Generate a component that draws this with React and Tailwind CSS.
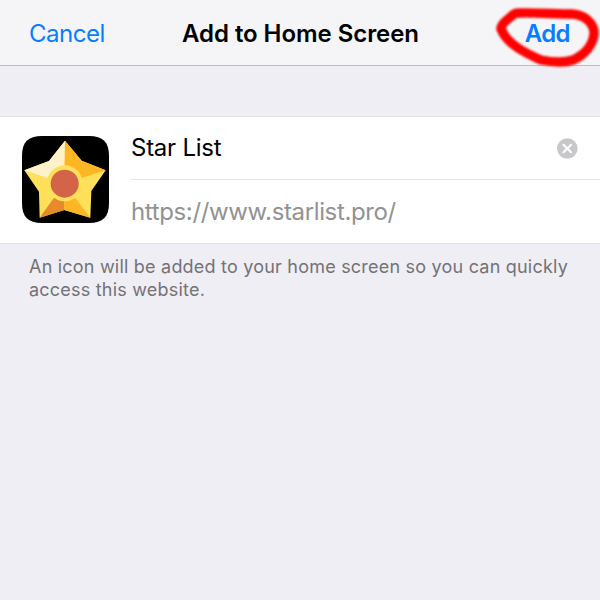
function StarIcon() {
  return (
    <svg viewBox="66 78 261 261" className="mb-[2px] size-[87px] shrink-0" aria-hidden="true">
      <path d="M126 78H267C309 78 327 96 327 138V279C327 321 309 339 267 339H126C84 339 66 321 66 279V138C66 96 84 78 126 78Z" fill="#000" />
      <path d="M195 92 245 152 317 181 274 243 271 323 193 300 119 323 117 245 73 181 147 153Z" fill="#ffe05a" />
      <path d="M195 92 147 153 73 181 144 204 193 220Z" fill="#fff2cb" />
      <path d="M195 92 245 152 317 181 244 204 193 220Z" fill="#ffb625" />
      <path d="M193 220 119 323 193 300Z" fill="#e68a2c" />
      <path d="M193 220 271 323 193 300Z" fill="#ffb625" />
      <circle cx="194" cy="220" r="54" fill="#ffe05a" />
      <circle cx="194" cy="221" r="42" fill="#d46447" />
    </svg>
  );
}

function ClearIcon() {
  return (
    <svg viewBox="0 0 21 21" className="size-[21px]" aria-hidden="true">
      <circle cx="10.3" cy="10.5" r="10.3" fill="#c8c8ca" />
      <path d="M6.5 6.7l7.6 7.6M14.1 6.7l-7.6 7.6" stroke="#fff" strokeWidth="2" strokeLinecap="round" />
    </svg>
  );
}

function Highlight() {
  return (
    <svg viewBox="480 0 120 80" className="pointer-events-none absolute top-0 right-0 h-20 w-[120px]" aria-hidden="true">
      <path
        d="M518 13C536 12.5 556 14 572 14C585 14.5 594.5 24 594 34C593 44 586 54 573 60C563 63.5 551 62 541 60C525 53 507 44 501 29C501 24 507 20 511 16.5C513 14.5 515 13 518 13Z"
        fill="none"
        stroke="#fe0000"
        strokeWidth="9.4"
        strokeLinejoin="round"
        className="blur-[1px]"
      />
    </svg>
  );
}

export default function App() {
  return (
    <div className="h-[600px] w-[600px] overflow-hidden bg-[#efeef4] font-['Inter',sans-serif] whitespace-nowrap">
      <header className="relative flex h-[66px] items-center justify-between border-b border-[#bebdc3] bg-[#f5f5f7] pt-[2px] pr-[30px] pl-[29px] text-2xl">
        <button className="w-[90px] text-left tracking-[-0.5px] text-[#077dff]">Cancel</button>
        <h1 className="pl-[2px] font-semibold tracking-[-0.06px]">Add to Home Screen</h1>
        <button className="w-[90px] text-right font-semibold tracking-[-0.6px] text-[#077dff]">Add</button>
        <Highlight />
      </header>
      <main className="pt-[50px]">
        <section className="flex h-32 items-center border-y border-[#e2e1e6] bg-white pl-[22px]">
          <StarIcon />
          <div className="ml-[21px] flex h-full flex-1 flex-col text-2xl">
            <div className="flex h-[63px] items-center justify-between border-b border-[#e6e6e9] pr-[22px] pl-px">
              <span className="tracking-[-0.25px]">Star List</span>
              <ClearIcon />
            </div>
            <div className="flex flex-1 items-center pt-px pl-px tracking-[-0.36px] text-[#929292]">https://www.starlist.pro/</div>
          </div>
        </section>
        <p className="pt-[11px] pl-[29px] text-lg leading-[23px] tracking-[0.21px] text-[#737277]">
          An icon will be added to your home screen so you can quickly
          <br />
          access this website.
        </p>
      </main>
    </div>
  );
}
